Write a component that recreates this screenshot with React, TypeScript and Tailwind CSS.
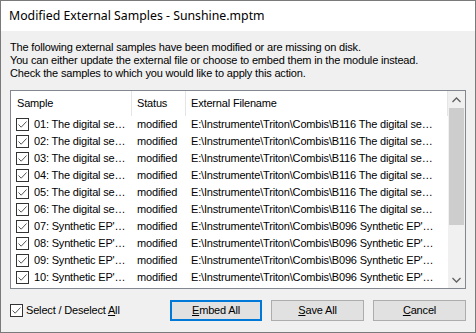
import React from "react";

const rows = [
  ["01: The digital se…", "B116 The digital se…"],
  ["02: The digital se…", "B116 The digital se…"],
  ["03: The digital se…", "B116 The digital se…"],
  ["04: The digital se…", "B116 The digital se…"],
  ["05: The digital se…", "B116 The digital se…"],
  ["06: The digital se…", "B116 The digital se…"],
  ["07: Synthetic EP'…", "B096 Synthetic EP'…"],
  ["08: Synthetic EP'…", "B096 Synthetic EP'…"],
  ["09: Synthetic EP'…", "B096 Synthetic EP'…"],
  ["10: Synthetic EP'…", "B096 Synthetic EP'…"],
];

function Check() {
  return (
    <div className="w-[13px] h-[13px] border border-[#333333] bg-white flex items-center justify-center shrink-0">
      <svg width="11" height="11" viewBox="0 0 11 11">
        <path d="M1.5 5.5 L4.2 8.2 L9.5 2.5" fill="none" stroke="#555555" strokeWidth="1" />
      </svg>
    </div>
  );
}

export default function App() {
  return (
    <div
      className="w-[476px] h-[333px] border border-[#7a7a7a] flex flex-col bg-[#f0f0f0] text-[11px] tracking-[-0.17px] text-black overflow-hidden"
      style={{ fontFamily: '"Liberation Sans", Arial, sans-serif' }}
    >
      <div className="h-[30px] bg-white flex items-center pl-[8px] text-[12.3px] tracking-normal shrink-0" style={{ fontFamily: '"Noto Sans", sans-serif' }}>
        Modified External Samples - Sunshine.mptm
      </div>
      <div className="flex-1 flex flex-col pl-[9px] pr-[9px] pt-[10px]">
        <div className="leading-[13px]">
          <div>The following external samples have been modified or are missing on disk.</div>
          <div>You can either update the external file or choose to embed them in the module instead.</div>
          <div>Check the samples to which you would like to apply this action.</div>
        </div>
        <div className="mt-[10px] w-[456px] h-[199px] border border-[#828790] bg-white flex overflow-hidden">
          <div className="flex-1 flex flex-col overflow-hidden">
            <div className="h-[25px] flex shrink-0 items-center">
              <div className="w-[121px] h-full pl-[6px] flex items-center border-r border-[#e5e5e5]">Sample</div>
              <div className="w-[54px] h-full pl-[5px] flex items-center border-r border-[#e5e5e5]">Status</div>
              <div className="w-[262px] h-full pl-[5px] flex items-center border-r border-[#e5e5e5]">External Filename</div>
            </div>
            {rows.map((r, i) => (
              <div key={i} className="h-[17px] flex items-center shrink-0 whitespace-nowrap">
                <div className="w-[121px] pl-[5px] flex items-center gap-[5px]">
                  <Check />
                  <span>{r[0]}</span>
                </div>
                <div className="w-[54px] pl-[5px]">modified</div>
                <div className="w-[262px] pl-[5px]">E:\Instrumente\Triton\Combis\{r[1]}</div>
              </div>
            ))}
          </div>
          <div className="w-[17px] bg-[#f0f0f0] flex flex-col shrink-0">
            <div className="h-[17px] flex items-center justify-center">
              <svg width="9" height="6" viewBox="0 0 9 6"><path d="M0.5 5 L4.5 1 L8.5 5" fill="none" stroke="#606060" strokeWidth="1.3" /></svg>
            </div>
            <div className="h-[117px] bg-[#cdcdcd] mx-[1px]"></div>
            <div className="flex-1"></div>
            <div className="h-[17px] flex items-center justify-center">
              <svg width="9" height="6" viewBox="0 0 9 6"><path d="M0.5 1 L4.5 5 L8.5 1" fill="none" stroke="#606060" strokeWidth="1.3" /></svg>
            </div>
          </div>
        </div>
        <div className="flex items-center mt-[11px]">
          <div className="flex items-center gap-[3px] flex-1">
            <Check />
            <span>Select / Deselect <u>A</u>ll</span>
          </div>
          <div className="flex gap-[9px]">
            <button className="w-[92px] h-[21px] border-2 border-[#0078d7] bg-[#e1e1e1]"><u>E</u>mbed All</button>
            <button className="w-[93px] h-[21px] border border-[#adadad] bg-[#e1e1e1]"><u>S</u>ave All</button>
            <button className="w-[93px] h-[21px] border border-[#adadad] bg-[#e1e1e1]"><u>C</u>ancel</button>
          </div>
        </div>
      </div>
    </div>
  );
}
